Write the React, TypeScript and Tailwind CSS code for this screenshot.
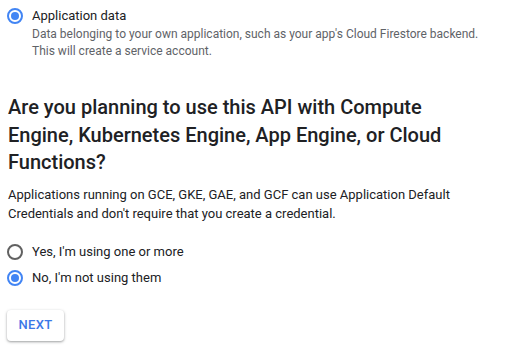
import React from "react";

function Radio({ checked }: { checked: boolean }) {
  return (
    <span
      className={`flex h-4 w-4 shrink-0 items-center justify-center rounded-full border-2 ${
        checked ? "border-[#4285f4]" : "border-[#616161]"
      }`}
    >
      {checked && <span className="h-2 w-2 rounded-full bg-[#4285f4]" />}
    </span>
  );
}

export default function App() {
  return (
    <div className="min-h-screen bg-white pl-[7px] pr-4 font-['Roboto',sans-serif] text-[#202124]">
      {/* Source option */}
      <div className="flex gap-[9px] pt-[6px]">
        <div className="pt-[2px]">
          <Radio checked />
        </div>
        <div>
          <div className="text-[13px] leading-5">Application data</div>
          <div className="text-[12px] leading-[17px] text-[#5f6368]">
            Data belonging to your own application, such as your app's Cloud Firestore backend.
            <br />
            This will create a service account.
          </div>
        </div>
      </div>

      <h2 className="mt-[34px] pl-px text-[20px] font-medium leading-[27.5px] text-[#202124]">
        Are you planning to use this API with Compute
        <br />
        Engine, Kubernetes Engine, App Engine, or Cloud
        <br />
        Functions?
      </h2>

      <p className="mt-[8px] pl-px text-[13px] leading-[19px] text-[#202124]">
        Applications running on GCE, GKE, GAE, and GCF can use Application Default
        <br />
        Credentials and don't require that you create a credential.
      </p>

      <div className="mt-[16px] flex flex-col">
        <label className="flex h-[26px] items-center gap-[9px] text-[13px]">
          <Radio checked={false} />
          Yes, I'm using one or more
        </label>
        <label className="flex h-[26px] items-center gap-[9px] text-[13px]">
          <Radio checked />
          No, I'm not using them
        </label>
      </div>

      <button className="mt-[19px] flex h-[31px] w-[57px] items-center justify-center rounded-[4px] bg-white text-[13px] font-medium tracking-[0.3px] text-[#3b78e7] shadow-[0_1px_3px_rgba(60,64,67,0.35),0_1px_2px_rgba(60,64,67,0.2)]">
        NEXT
      </button>
    </div>
  );
}
